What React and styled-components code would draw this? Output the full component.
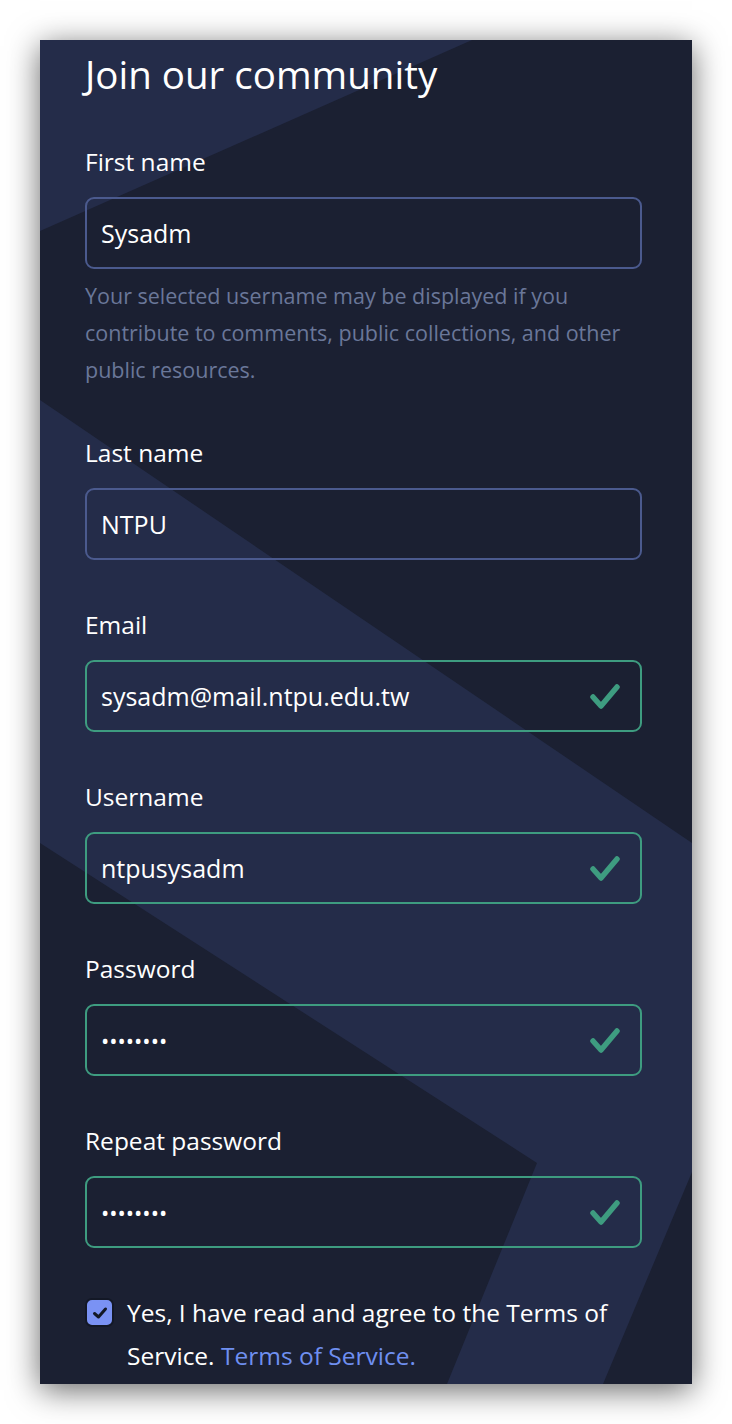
import React from "react";
import styled, { createGlobalStyle } from "styled-components";

const Global = createGlobalStyle`
  html, body { margin: 0; padding: 0; background: #ffffff; }
  body { font-family: "Open Sans", "Noto Sans", sans-serif; }
  * { box-sizing: border-box; }
`;

const Page = styled.div`
  padding: 40px;
  width: 732px;
`;

const Card = styled.div`
  position: relative;
  width: 652px;
  height: 1344px;
  overflow: hidden;
  background: #1b2032;
  box-shadow: 0 6px 30px rgba(0, 0, 0, 0.6);
`;

const Backdrop = styled.svg`
  position: absolute;
  inset: 0;
  width: 100%;
  height: 100%;
  pointer-events: none;
`;

const Content = styled.form`
  position: relative;
  padding: 9px 50px 0 45px;
  display: flex;
  flex-direction: column;
  color: #ffffff;
`;

const Title = styled.h1`
  margin: 0 0 45px;
  font-size: 38.5px;
  line-height: 50px;
  font-weight: 400;
`;

const Field = styled.div`
  display: flex;
  flex-direction: column;
  margin-bottom: 47px;
`;

const Label = styled.label`
  font-size: 24.5px;
  line-height: 36px;
  margin-bottom: 17px;
`;

const InputWrap = styled.div`
  position: relative;
  height: 72px;
  border-radius: 9px;
  border: 2px solid ${(p) => (p.$valid ? "#3e9c80" : "#4b5a8e")};
`;

const Input = styled.input`
  width: 100%;
  height: 100%;
  border: 0;
  outline: none;
  background: transparent;
  color: #ffffff;
  font-family: inherit;
  font-size: ${(p) => (p.type === "password" ? "22px" : "25px")};
  padding: 0 60px 0 14px;
`;

const CheckMark = styled.svg`
  position: absolute;
  right: 18px;
  top: 50%;
  transform: translateY(-50%);
  width: 34px;
  height: 30px;
`;

const Helper = styled.p`
  margin: 8px 0 0;
  font-size: 21.5px;
  line-height: 37px;
  color: #6a7799;
`;

const Agree = styled.div`
  display: flex;
  align-items: flex-start;
  gap: 13px;
  margin-top: -4px;
`;

const Box = styled.span`
  flex: none;
  width: 29px;
  height: 29px;
  margin-top: 7px;
  border-radius: 7px;
  border: 2px solid #131826;
  background: #7a92f4;
  display: flex;
  align-items: center;
  justify-content: center;
`;

const AgreeText = styled.p`
  margin: 0;
  font-size: 24.5px;
  line-height: 43px;
  color: #ffffff;
`;

const Link = styled.a`
  color: #6f8ff0;
  text-decoration: none;
`;

const Check = () => (
  <CheckMark viewBox="0 0 34 30">
    <path
      d="M5 16 L13 25 L29 6"
      fill="none"
      stroke="#3e9c80"
      strokeWidth="5.5"
      strokeLinecap="round"
      strokeLinejoin="round"
    />
  </CheckMark>
);

const fields = [
  { label: "Last name", value: "NTPU" },
  { label: "Email", value: "sysadm@mail.ntpu.edu.tw", valid: true },
  { label: "Username", value: "ntpusysadm", valid: true },
  { label: "Password", value: "12345678", valid: true, type: "password" },
  { label: "Repeat password", value: "12345678", valid: true, type: "password" },
];

export default function App() {
  return (
    <Page>
      <Global />
      <Card>
        <Backdrop viewBox="0 0 652 1344" preserveAspectRatio="none">
          <polygon points="0,0 432,0 0,191" fill="#242c49" />
          <polygon
            points="0,360 652,803 652,1132 563,1344 407,1344 497,1123 0,803"
            fill="#242c49"
          />
        </Backdrop>
        <Content onSubmit={(e) => e.preventDefault()}>
          <Title>Join our community</Title>
          <Field>
            <Label>First name</Label>
            <InputWrap>
              <Input defaultValue="Sysadm" readOnly />
            </InputWrap>
            <Helper>
              Your selected username may be displayed if you contribute to
              comments, public collections, and other public resources.
            </Helper>
          </Field>
          {fields.map((f) => (
            <Field key={f.label}>
              <Label>{f.label}</Label>
              <InputWrap $valid={f.valid}>
                <Input type={f.type || "text"} defaultValue={f.value} readOnly />
                {f.valid && <Check />}
              </InputWrap>
            </Field>
          ))}
          <Agree>
            <Box>
              <svg width="16" height="14" viewBox="0 0 16 14">
                <path
                  d="M2.5 7.5 L6.5 11 L13.5 3"
                  fill="none"
                  stroke="#131826"
                  strokeWidth="3"
                  strokeLinecap="round"
                  strokeLinejoin="round"
                />
              </svg>
            </Box>
            <AgreeText>
              Yes, I have read and agree to the Terms of Service.{" "}
              <Link href="#">Terms of Service.</Link>
            </AgreeText>
          </Agree>
        </Content>
      </Card>
    </Page>
  );
}
